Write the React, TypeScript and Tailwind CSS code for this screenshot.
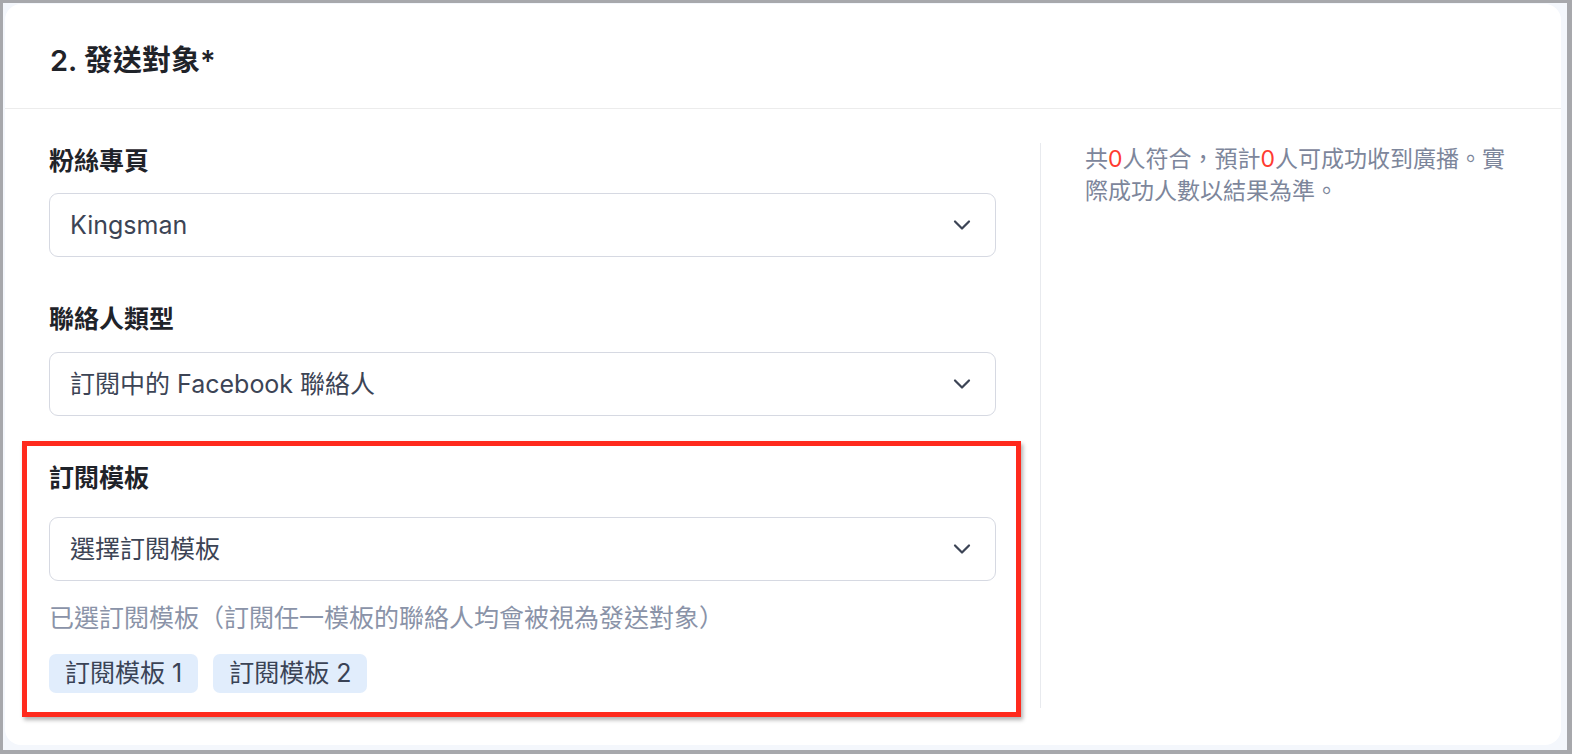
import React from "react";

const FONT = { fontFamily: 'Inter, "Noto Sans CJK TC", "Noto Sans", sans-serif' };

function Chevron() {
  return (
    <svg width="28" height="28" viewBox="0 0 24 24" fill="none" stroke="#3c4455" strokeWidth="1.9" strokeLinecap="round" strokeLinejoin="round">
      <path d="m6 9 6 6 6-6" />
    </svg>
  );
}

function Select({ value, className = "" }: { value: string; className?: string }) {
  return (
    <div className={`h-[64px] rounded-[9px] border border-[#d6d9e2] bg-white flex items-center justify-between pl-[20px] pr-[19px] ${className}`}>
      <span className="text-[25px] text-[#3c4455] leading-none">{value}</span>
      <Chevron />
    </div>
  );
}

function Label({ children, className = "" }: { children: React.ReactNode; className?: string }) {
  return <div className={`text-[25px] leading-[36px] font-semibold text-[#1f2329] ${className}`}>{children}</div>;
}

export default function App() {
  return (
    <div className="w-[1572px] h-[754px] bg-[#a7a8ac] pl-[3px] pt-[3px] pr-[5px] pb-[4px]" style={FONT}>
      <div className="w-full h-full bg-[#f4f7fc] pl-[2px] pt-[1px] pr-[6px] pb-[5px]">
        <div className="w-full h-full bg-white rounded-[16px] flex flex-col">
          <div className="h-[105px] border-b border-[#ececec] flex items-center pl-[45px] pt-[8px]">
            <h2 className="text-[29px] font-semibold text-[#1f2329] leading-none">2. 發送對象*</h2>
          </div>
          <div className="flex pt-[34px]">
            <div className="w-[947px] ml-[44px] pb-[15px] flex flex-col">
              <Label>粉絲專頁</Label>
              <Select value="Kingsman" className="mt-[14px]" />
              <Label className="mt-[44px]">聯絡人類型</Label>
              <Select value="訂閱中的 Facebook 聯絡人" className="mt-[15px]" />
              <div className="relative mt-[44px] flex flex-col">
                <div className="absolute -left-[27px] -top-[19px] -right-[25px] -bottom-[24px] border-[5px] border-[#ff2a1d] shadow-[2px_3px_4px_rgba(0,0,0,0.3)] pointer-events-none" />
                <Label>訂閱模板</Label>
                <Select value="選擇訂閱模板" className="mt-[21px]" />
                <div className="mt-[19px] text-[25px] leading-[36px] text-[#8a93a8]">已選訂閱模板（訂閱任一模板的聯絡人均會被視為發送對象）</div>
                <div className="mt-[18px] flex gap-[15px]">
                  <span className="h-[39px] px-[16px] rounded-[7px] bg-[#e1edfc] text-[25px] text-[#3a4356] flex items-center">訂閱模板 1</span>
                  <span className="h-[39px] px-[16px] rounded-[7px] bg-[#e1edfc] text-[25px] text-[#3a4356] flex items-center">訂閱模板 2</span>
                </div>
              </div>
            </div>
            <div className="ml-[44px] border-l border-[#e8eaee] pl-[44px]">
              <p className="w-[432px] text-[23px] leading-[32px] text-[#7d869b]">
                共<span className="text-[#ff3b30]">0</span>人符合，預計<span className="text-[#ff3b30]">0</span>人可成功收到廣播。實際成功人數以結果為準。
              </p>
            </div>
          </div>
        </div>
      </div>
    </div>
  );
}
